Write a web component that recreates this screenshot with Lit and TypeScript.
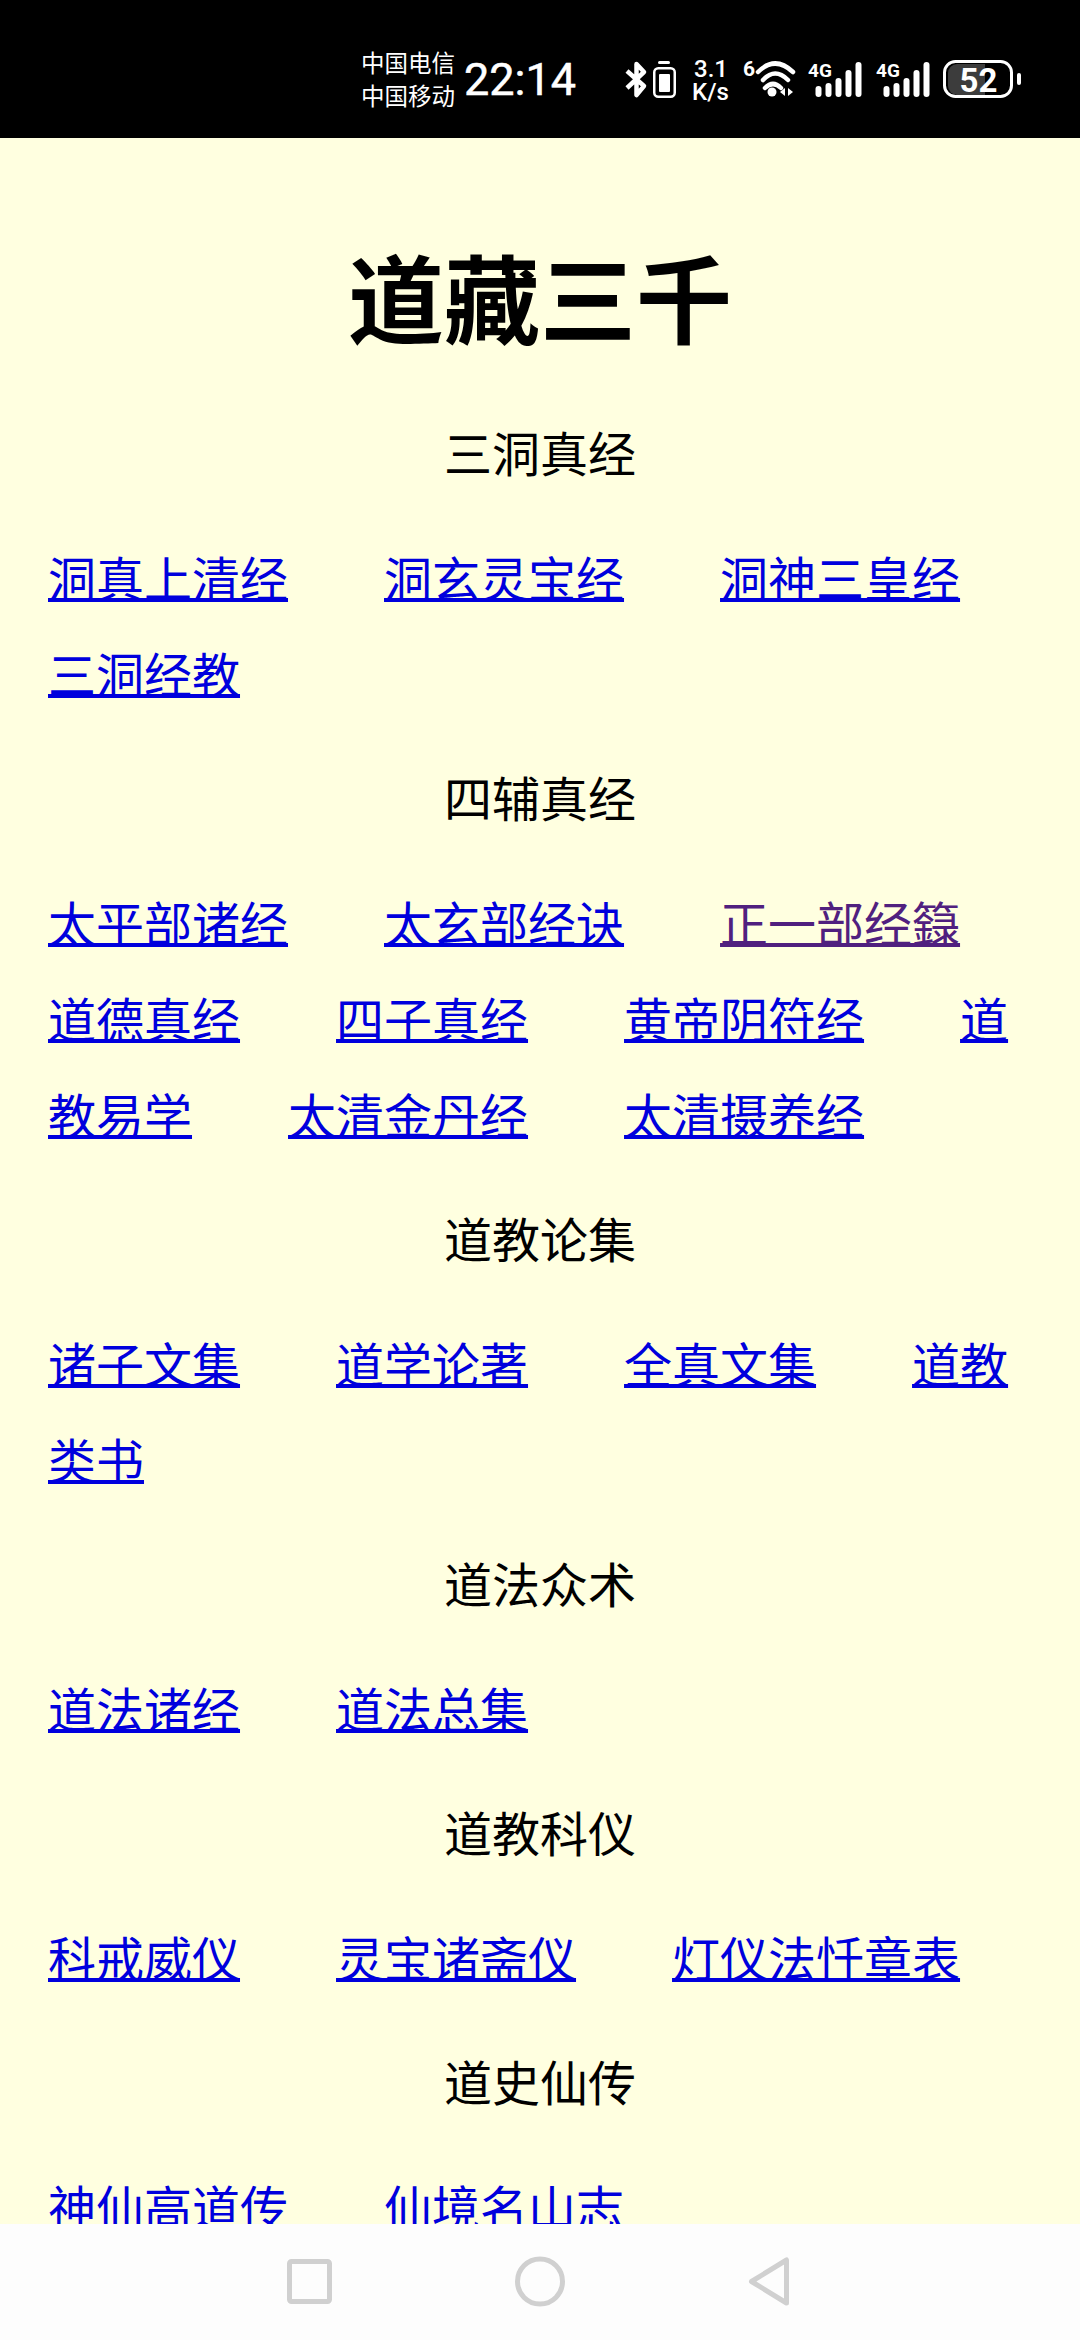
import { LitElement, html, css, svg } from "lit";
import { customElement } from "lit/decorators.js";

const SECTIONS: { title: string; links: (string | [string])[] }[] = [
  { title: "三洞真经", links: ["洞真上清经", "洞玄灵宝经", "洞神三皇经", "三洞经教"] },
  { title: "四辅真经", links: ["太平部诸经", "太玄部经诀", ["正一部经籙"], "道德真经", "四子真经", "黄帝阴符经", "道教易学", "太清金丹经", "太清摄养经"] },
  { title: "道教论集", links: ["诸子文集", "道学论著", "全真文集", "道教类书"] },
  { title: "道法众术", links: ["道法诸经", "道法总集"] },
  { title: "道教科仪", links: ["科戒威仪", "灵宝诸斋仪", "灯仪法忏章表"] },
  { title: "道史仙传", links: ["神仙高道传", "仙境名山志"] },
];

@customElement("app-root")
export class AppRoot extends LitElement {
  static styles = css`
    :host { display: block; width: 1080px; height: 2340px; overflow: hidden; position: relative; background: #ffffe0;
      font-family: "Noto Sans CJK SC", "Liberation Sans", sans-serif; color: #000; }
    .status { height: 138px; background: #000; color: #fff; display: flex; align-items: flex-start; box-sizing: border-box; padding: 46px 0 0 361px; position: relative; }
    .carrier { font-size: 23.5px; line-height: 33px; width: 103px; flex: none; }
    .time { font: 400 45px/68px Roboto, sans-serif; -webkit-text-stroke: 0.5px #fff; flex: none; }
    .icons { position: absolute; left: 0; top: 0; }
    main { padding: 0 48px; }
    h1 { margin: 0; padding-top: 92px; text-align: center; font-size: 96px; font-weight: 700; line-height: 130px; }
    h2 { margin: 63px 0 48px; text-align: center; font-size: 48px; font-weight: 400; line-height: 57px; }
    h2 ~ h2 { margin-top: 0; }
    .links { margin: 0 0 48px; font-size: 48px; line-height: 96px; }
    .sep { font-size: 0; line-height: 0; word-spacing: 96px; }
    a { color: #0000dd; text-decoration: underline; text-decoration-thickness: 4px; text-underline-offset: 1px; text-decoration-skip-ink: none; }
    a.visited { color: #50207f; }
    .nav { position: absolute; left: 0; right: 0; bottom: 0; height: 116px; background: #fdfdfd; }
    .nav svg { display: block; }
    .net { font: 500 24px Roboto, sans-serif; fill: #fff; }
    .six { font: 700 21px Roboto, sans-serif; fill: #fff; }
    .batt { font: 700 33px Roboto, sans-serif; fill: #fff; }
    .g { font: 700 19px Roboto, sans-serif; fill: #fff; }
  `;

  bars(x: number) {
    const hs = [11, 14, 19, 27, 35];
    return svg`<g fill="#fff">
      ${hs.map((h, i) => svg`<rect x=${x + i * 10} y=${97 - h} width="6" height=${h} rx="3"/>`)}
    </g>`;
  }

  render() {
    return html`
      <div class="status">
        <div class="carrier">中国电信<br />中国移动</div>
        <div class="time">22:14</div>
        <svg class="icons" width="1080" height="138" viewBox="0 0 1080 138">
          <path d="M627 71l17 15-7.500 9V64l7.500 8-17 16" fill="none" stroke="#fff" stroke-width="4.500" stroke-linejoin="round"/>
          <rect x="658" y="61" width="12" height="3" rx="1.500" fill="#fff"/>
          <rect x="654.250" y="68.250" width="20.500" height="28.500" rx="4" fill="none" stroke="#fff" stroke-width="2.500"/>
          <rect x="659" y="74" width="11" height="18" rx="1" fill="#fff"/>
          <text class="net" x="694" y="77">3.1</text>
          <text class="net" x="692" y="100">K/s</text>
          <text class="six" x="743" y="76">6</text>
          <g fill="none" stroke="#fff" stroke-width="4.500" stroke-linecap="round">
            <path d="M758 72Q775 55 793 72"/><path d="M763 80Q775 67 788 80"/><path d="M765 88Q773 80 781 88"/>
          </g>
          <circle cx="772" cy="92" r="4.500" fill="#fff"/>
          <path d="M785 88l-5 4 5 4zM788 88l5 4-5 4z" fill="#fff"/>
          <text class="g" x="808" y="77">4G</text>
          ${this.bars(815.500)}
          <text class="g" x="876" y="77">4G</text>
          ${this.bars(883.500)}
          <path d="M957 64h28v31h-28a9 9 0 0 1-9-9V73a9 9 0 0 1 9-9z" fill="#3c3c3c"/>
          <rect x="944.500" y="61.500" width="67" height="35" rx="11" fill="none" stroke="#fff" stroke-width="3"/>
          <text class="batt" x="978.500" y="92" text-anchor="middle">52</text>
          <rect x="1017" y="73" width="4" height="12" rx="2" fill="#fff"/>
        </svg>
      </div>
      <main>
        <h1>道藏三千</h1>
        ${SECTIONS.map(
          (s) => html`<h2>${s.title}</h2>
            <p class="links">${s.links.map((l, i) => html`${i ? html`<span class="sep"> </span>` : ""}${
              Array.isArray(l) ? html`<a class="visited" href="#">${l[0]}</a>` : html`<a href="#">${l}</a>`
            }`)}</p>`
        )}
      </main>
      <div class="nav">
        <svg width="1080" height="116" viewBox="0 2224 1080 116">
          <rect x="289.500" y="2261.500" width="40" height="40" rx="2" fill="none" stroke="#d0d0d0" stroke-width="5"/>
          <circle cx="540" cy="2281.500" r="22.500" fill="none" stroke="#d0d0d0" stroke-width="5"/>
          <path d="M786.500 2260v43l-35-21.500z" fill="none" stroke="#d0d0d0" stroke-width="5" stroke-linejoin="round"/>
        </svg>
      </div>
    `;
  }
}
